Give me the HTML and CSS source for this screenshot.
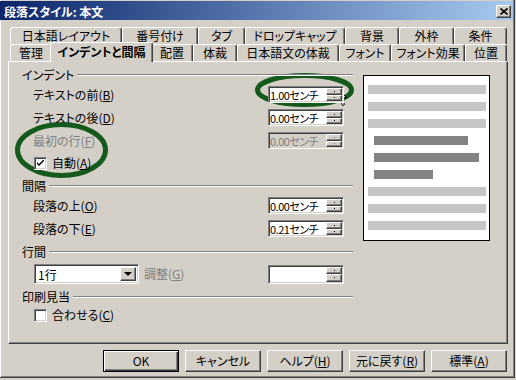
FILE: index.html
```html
<!DOCTYPE html>
<html>
<head>
    <title>段落スタイル: 本文</title>
    <link rel="stylesheet" href="styles.css">
</head>
<body>
    <div class="window">
        <div class="titlebar">
            <span class="title">段落スタイル: 本文</span>
            <span class="close-btn">
                <svg width="8" height="7" viewBox="0 0 8 7"><path d="M0.5 0.5 L7.5 6.5 M7.5 0.5 L0.5 6.5" stroke="#000" stroke-width="1.6"/></svg>
            </span>
        </div>

        <div class="tabs">
            <div class="tab-row back">
                <div class="tab">日本語レイアウト</div>
                <div class="tab">番号付け</div>
                <div class="tab">タブ</div>
                <div class="tab">ドロップキャップ</div>
                <div class="tab">背景</div>
                <div class="tab">外枠</div>
                <div class="tab">条件</div>
            </div>
            <div class="tab-row front">
                <div class="tab">管理</div>
                <div class="tab active">インデントと間隔</div>
                <div class="tab">配置</div>
                <div class="tab">体裁</div>
                <div class="tab">日本語文の体裁</div>
                <div class="tab">フォント</div>
                <div class="tab">フォント効果</div>
                <div class="tab">位置</div>
            </div>
        </div>

        <div class="panel">
            <div class="form">
                <div class="heading"><span>インデント</span><div class="rule"></div></div>
                <div class="field-row">
                    <span class="label">テキストの前(<u>B</u>)</span>
                    <div class="spin"><span class="value">1.00センチ</span><div class="spin-btns"><i class="up"></i><i class="down"></i></div></div>
                </div>
                <div class="field-row">
                    <span class="label">テキストの後(<u>D</u>)</span>
                    <div class="spin"><span class="value">0.00センチ</span><div class="spin-btns"><i class="up"></i><i class="down"></i></div></div>
                </div>
                <div class="field-row">
                    <span class="label disabled">最初の行(<u>F</u>)</span>
                    <div class="spin disabled"><span class="value">0.00センチ</span><div class="spin-btns"><i class="up"></i><i class="down"></i></div></div>
                </div>
                <div class="check-row tall">
                    <span class="checkbox checked">
                        <svg width="7" height="7" viewBox="0 0 7 7"><path d="M0 2 L0 4 L2 6 L7 1 L7 -1 L2 4 Z" fill="#000"/></svg>
                    </span>
                    <span>自動(<u>A</u>)</span>
                </div>

                <div class="heading gap"><span>間隔</span><div class="rule"></div></div>
                <div class="field-row">
                    <span class="label">段落の上(<u>O</u>)</span>
                    <div class="spin"><span class="value">0.00センチ</span><div class="spin-btns"><i class="up"></i><i class="down"></i></div></div>
                </div>
                <div class="field-row">
                    <span class="label">段落の下(<u>E</u>)</span>
                    <div class="spin"><span class="value">0.21センチ</span><div class="spin-btns"><i class="up"></i><i class="down"></i></div></div>
                </div>

                <div class="heading gap"><span>行間</span><div class="rule"></div></div>
                <div class="combo-row">
                    <div class="combo-group">
                        <div class="combo"><span class="value">1行</span><span class="combo-btn"><i></i></span></div>
                        <span class="disabled adjust">調整(<u>G</u>)</span>
                    </div>
                    <div class="spin big"><span class="value"></span><div class="spin-btns"><i class="up"></i><i class="down"></i></div></div>
                </div>

                <div class="heading gap-lg"><span>印刷見当</span><div class="rule"></div></div>
                <div class="check-row">
                    <span class="checkbox"></span>
                    <span>合わせる(<u>C</u>)</span>
                </div>
            </div>

            <div class="preview">
                <div class="bar"></div>
                <div class="bar"></div>
                <div class="bar"></div>
                <div class="bar current w1"></div>
                <div class="bar current w2"></div>
                <div class="bar current w3"></div>
                <div class="bar"></div>
                <div class="bar"></div>
                <div class="bar"></div>
            </div>
        </div>

        <div class="buttons">
            <div class="btn default">OK</div>
            <div class="btn">キャンセル</div>
            <div class="btn">ヘルプ(<u>H</u>)</div>
            <div class="btn">元に戻す(<u>R</u>)</div>
            <div class="btn">標準(<u>A</u>)</div>
        </div>

        <!-- hand-drawn marks and mouse pointer laid over the dialog -->
        <svg class="marks" width="516" height="380" viewBox="0 0 516 380">
            <ellipse cx="304.5" cy="90" rx="47" ry="14.5" fill="none" stroke="#145a1c" stroke-width="5"/>
            <ellipse cx="61.5" cy="150" rx="44" ry="25.5" fill="none" stroke="#145a1c" stroke-width="5"/>
            <path d="M335.5 86.5 L335.5 102.5 L339.5 98.5 L342.5 105.5 L344.5 104.5 L341.5 97.5 L346.5 97.5 Z" fill="#fff" stroke="#000" stroke-width="1" stroke-linejoin="miter"/>
        </svg>
    </div>
</body>
</html>
```

FILE: styles.css
```css
body {
    margin: 0;
    background-color: #d4d0c8;
    font-family: "Noto Sans CJK JP", "Liberation Sans", sans-serif;
    font-size: 12px;
    line-height: 14px;
    font-feature-settings: "palt";
    color: #000;
}

u {
    text-decoration: underline;
    text-underline-offset: 1px;
}

.window {
    position: relative;
    width: 515px;
    height: 378px;
    box-sizing: border-box;
    border-right: 1px solid #404040;
    border-bottom: 1px solid #404040;
    box-shadow: inset 1px 0 #fff, inset -1px -1px #808080;
    overflow: hidden;
}

.titlebar {
    display: flex;
    align-items: center;
    justify-content: space-between;
    height: 19px;
    margin: 1px 1px 0 0;
    padding: 0 2px 0 4px;
    background: linear-gradient(to right, #0a246a, #a6caf0);
}

.title {
    color: #fff;
    font-weight: bold;
    padding-top: 2px;
}

.close-btn {
    display: flex;
    align-items: center;
    justify-content: center;
    width: 15px;
    height: 13px;
    margin-top: 2px;
    box-sizing: border-box;
    background-color: #d4d0c8;
    border: 1px solid;
    border-color: #fff #404040 #404040 #fff;
    box-shadow: inset -1px -1px #808080;
}

/* tabs */
.tabs {
    margin-top: 7px;
    padding-left: 10px;
}

.tab-row {
    display: flex;
    align-items: flex-end;
    width: 497px;
    height: 17px;
}

.tab-row.front {
    position: relative;
    z-index: 2;
}

.tab {
    flex: none;
    height: 17px;
    box-sizing: border-box;
    border-left: 1px solid #fff;
    border-top: 1px solid #fff;
    border-right: 1px solid #404040;
    border-radius: 3px 3px 0 0;
    box-shadow: inset -1px 0 #808080;
    background-color: #d4d0c8;
    text-align: center;
    line-height: 16px;
    white-space: nowrap;
}

.tab.active {
    position: relative;
    z-index: 1;
    height: 20px;
    margin: 0 -2px -1px;
    font-weight: bold;
    line-height: 18px;
}

.back .tab:nth-child(1) { width: 112px; }
.back .tab:nth-child(2) { width: 76px; }
.back .tab:nth-child(3) { width: 47px; }
.back .tab:nth-child(4) { width: 100px; }
.back .tab:nth-child(5) { width: 54px; }
.back .tab:nth-child(6) { width: 55px; }
.back .tab:nth-child(7) { width: 53px; }

.front .tab:nth-child(1) { width: 42px; }
.front .tab:nth-child(2) { width: 103px; }
.front .tab:nth-child(3) { width: 42px; }
.front .tab:nth-child(4) { width: 44px; }
.front .tab:nth-child(5) { width: 102px; }
.front .tab:nth-child(6) { width: 52px; }
.front .tab:nth-child(7) { width: 74px; }
.front .tab:nth-child(8) { width: 42px; }

/* tab page */
.panel {
    position: relative;
    z-index: 1;
    display: flex;
    align-items: flex-start;
    width: 500px;
    height: 283px;
    margin-left: 8px;
    box-sizing: border-box;
    padding: 5px 0 0 13px;
    border-top: 1px solid #fff;
    border-left: 1px solid #fff;
    border-right: 1px solid #404040;
    border-bottom: 1px solid #404040;
    box-shadow: inset -1px -1px #808080;
}

.form {
    width: 331px;
}

.heading {
    display: flex;
    align-items: center;
    height: 16px;
}

.heading.gap {
    margin-top: 4px;
}

.heading.gap-lg {
    margin-top: 5px;
}

.rule {
    flex: 1;
    height: 0;
    margin-left: 3px;
    border-top: 1px solid #808080;
    border-bottom: 1px solid #fff;
}

.field-row {
    display: flex;
    align-items: center;
    height: 23px;
    padding-left: 11px;
}

.field-row .label {
    width: 235px;
}

.disabled {
    color: #808080;
}

.check-row {
    display: flex;
    align-items: center;
    height: 20px;
    padding-left: 12px;
}

.check-row.tall {
    height: 22px;
}

.checkbox {
    display: flex;
    align-items: center;
    justify-content: center;
    width: 13px;
    height: 13px;
    margin-right: 5px;
    box-sizing: border-box;
    background-color: #fff;
    border: 1px solid;
    border-color: #808080 #fff #fff #808080;
    box-shadow: inset 1px 1px #404040, inset -1px -1px #d4d0c8;
}

/* spin field */
.spin {
    display: flex;
    width: 76px;
    height: 17px;
    box-sizing: border-box;
    padding: 2px 2px 2px 1px;
    background-color: #fff;
    border: 1px solid;
    border-color: #808080 #fff #fff #808080;
    box-shadow: inset 1px 1px #404040, inset -1px -1px #d4d0c8;
}

.spin.big {
    height: 19px;
}

.spin.disabled {
    background-color: #d4d0c8;
}

.spin .value {
    flex: 1;
    font-size: 11px;
    line-height: 13px;
    white-space: nowrap;
    letter-spacing: -0.5px;
}

.spin-btns {
    flex: none;
    display: flex;
    flex-direction: column;
    width: 16px;
    margin: -1px -1px -1px 0;
}

.spin-btns i,
.combo-btn {
    display: flex;
    align-items: center;
    justify-content: center;
    flex: 1;
    box-sizing: border-box;
    background-color: #d4d0c8;
    border: 1px solid;
    border-color: #fff #404040 #404040 #fff;
    box-shadow: inset -1px -1px #808080;
}

.spin-btns i::after {
    content: "";
    width: 1px;
    height: 1px;
    background-color: #000;
}

.spin.disabled .spin-btns i::after {
    background-color: #808080;
}

/* combo box */
.combo-row {
    display: flex;
    align-items: center;
    height: 20px;
    margin-top: 4px;
    padding-left: 12px;
}

.combo-group {
    display: flex;
    align-items: center;
    width: 234px;
}

.combo {
    display: flex;
    width: 105px;
    height: 20px;
    box-sizing: border-box;
    padding: 2px;
    background-color: #fff;
    border: 1px solid;
    border-color: #808080 #fff #fff #808080;
    box-shadow: inset 1px 1px #404040, inset -1px -1px #d4d0c8;
}

.combo .value {
    flex: 1;
    line-height: 15px;
    padding-left: 1px;
}

.combo-btn {
    flex: none;
    width: 16px;
}

.combo-btn i {
    width: 0;
    height: 0;
    border-left: 4px solid transparent;
    border-right: 4px solid transparent;
    border-top: 4px solid #000;
}

.adjust {
    margin-left: 5px;
}

/* preview */
.preview {
    display: flex;
    flex-direction: column;
    gap: 8px;
    width: 127px;
    height: 166px;
    margin: 8px 0 0 10px;
    box-sizing: border-box;
    padding: 9px 4px;
    background-color: #fff;
    border: 1px solid #000;
}

.bar {
    width: 118px;
    height: 9px;
    background-color: #c6c6c6;
}

.bar.current {
    margin-left: 6px;
    background-color: #838383;
}

.bar.w1 { width: 94px; }
.bar.w2 { width: 105px; }
.bar.w3 { width: 59px; }

/* buttons */
.buttons {
    display: flex;
    justify-content: flex-end;
    gap: 6px;
    margin-top: 6px;
    padding-right: 7px;
}

.btn {
    width: 76px;
    height: 22px;
    box-sizing: border-box;
    border: 1px solid;
    border-color: #fff #404040 #404040 #fff;
    box-shadow: inset -1px -1px #808080;
    text-align: center;
    line-height: 19px;
}

.btn.default {
    border: 1px solid #000;
    box-shadow: inset 1px 1px #fff, inset -1px -1px #404040, inset -2px -2px #808080;
}

.marks {
    position: absolute;
    left: 0;
    top: 0;
    pointer-events: none;
}
```
